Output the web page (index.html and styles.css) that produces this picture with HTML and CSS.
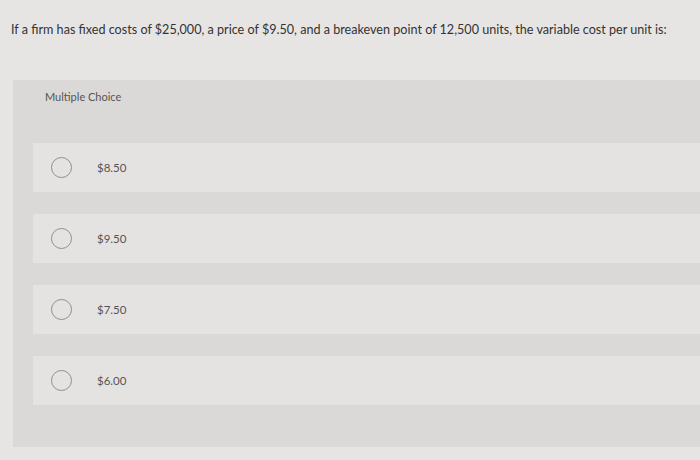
FILE: index.html
```html
<!DOCTYPE html>
<html>
<head>
<meta charset="utf-8">
<link rel="stylesheet" href="styles.css">
</head>
<body>
<div class="page">
  <p class="question">If a firm has fixed costs of $25,000, a price of $9.50, and a breakeven point of 12,500 units, the variable cost per unit is:</p>
  <div class="panel">
    <div class="panel-title">Multiple Choice</div>
    <div class="options">
      <div class="option"><span class="radio"></span><span class="label">$8.50</span></div>
      <div class="option"><span class="radio"></span><span class="label">$9.50</span></div>
      <div class="option"><span class="radio"></span><span class="label">$7.50</span></div>
      <div class="option"><span class="radio"></span><span class="label">$6.00</span></div>
    </div>
  </div>
</div>
</body>
</html>
```
FILE: styles.css
```css
html, body {
  margin: 0;
  padding: 0;
}
body {
  background: #e7e5e4;
  font-family: Lato, "Open Sans", sans-serif;
  color: #3a3a3a;
  width: 700px;
  height: 460px;
  overflow: hidden;
}
.page {
  padding-top: 21px;
}
.question {
  margin: 0 0 0 11px;
  font-size: 12.6px;
  line-height: 18px;
  color: #333;
  white-space: nowrap;
}
.panel {
  margin: 41px 0 0 13px;
  background: #dbd9d8;
  height: 367px;
  padding-left: 20px;
}
.panel-title {
  padding: 10px 0 0 12px;
  height: 63px;
  box-sizing: border-box;
  font-size: 11px;
  line-height: 14px;
  color: #555;
}
.options {
  display: flex;
  flex-direction: column;
  gap: 22px;
}
.option {
  height: 49px;
  background: #e5e3e1;
  display: flex;
  align-items: center;
}
.radio {
  width: 21px;
  height: 21px;
  border: 1.4px solid #8e8e8e;
  border-radius: 50%;
  margin-left: 18px;
  box-sizing: border-box;
}
.label {
  margin-left: 25px;
  font-size: 11.5px;
  color: #555;
}
```
